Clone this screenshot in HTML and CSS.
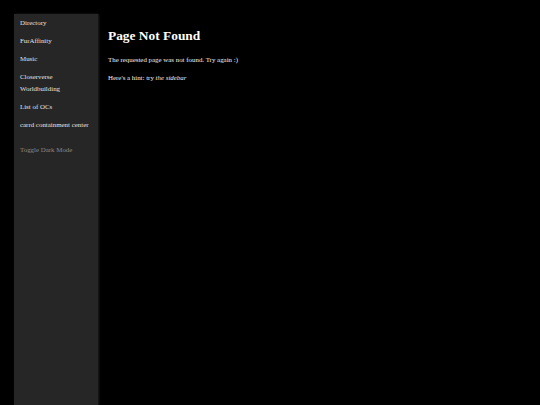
FILE: index.html
```html
<!DOCTYPE html>
<html>
<head>
<meta charset="utf-8">
<title>Page Not Found</title>
<link rel="stylesheet" href="styles.css">
</head>
<body>
<div class="page">
  <nav class="sidebar">
    <a class="nav-item" href="#">Directory</a>
    <a class="nav-item" href="#">FurAffinity</a>
    <a class="nav-item" href="#">Music</a>
    <a class="nav-item" href="#">Closerverse Worldbuilding</a>
    <a class="nav-item" href="#">List of OCs</a>
    <a class="nav-item" href="#">carrd containment center</a>
    <a class="nav-item toggle" href="#">Toggle Dark Mode</a>
  </nav>
  <main class="content">
    <h1 class="title">Page Not Found</h1>
    <p class="text">The requested page was not found. Try again :)</p>
    <p class="text">Here's a hint: try <em>the sidebar</em></p>
  </main>
</div>
</body>
</html>
```

FILE: styles.css
```css
html, body {
  margin: 0;
  padding: 0;
  background: #000;
  height: 100%;
}
body {
  font-family: "Liberation Serif", "Times New Roman", serif;
  font-size: 6.9px;
  color: #f0f0f0;
}
.page {
  display: flex;
  align-items: stretch;
  padding: 14px 0 0 14px;
  height: 100vh;
  box-sizing: border-box;
  overflow: hidden;
}
.sidebar {
  width: 84px;
  flex: none;
  background: #262626;
  box-shadow: 1px 0 2px rgba(40, 40, 40, 0.8);
  display: flex;
  flex-direction: column;
  padding: 3px 8px 0 6px;
  box-sizing: border-box;
}
.nav-item {
  display: block;
  color: #e2e2e2;
  text-decoration: none;
  line-height: 12px;
  margin-bottom: 6px;
}
.nav-item.toggle {
  color: #8a8a8a;
  margin-top: 6.7px;
}
.content {
  padding-left: 10px;
  padding-top: 13.5px;
}
.title {
  font-size: 13.4px;
  font-weight: bold;
  line-height: 16px;
  margin: 0 0 10px 0;
  color: #ffffff;
}
.text {
  margin: 0 0 6px 0;
  line-height: 12px;
}
```
